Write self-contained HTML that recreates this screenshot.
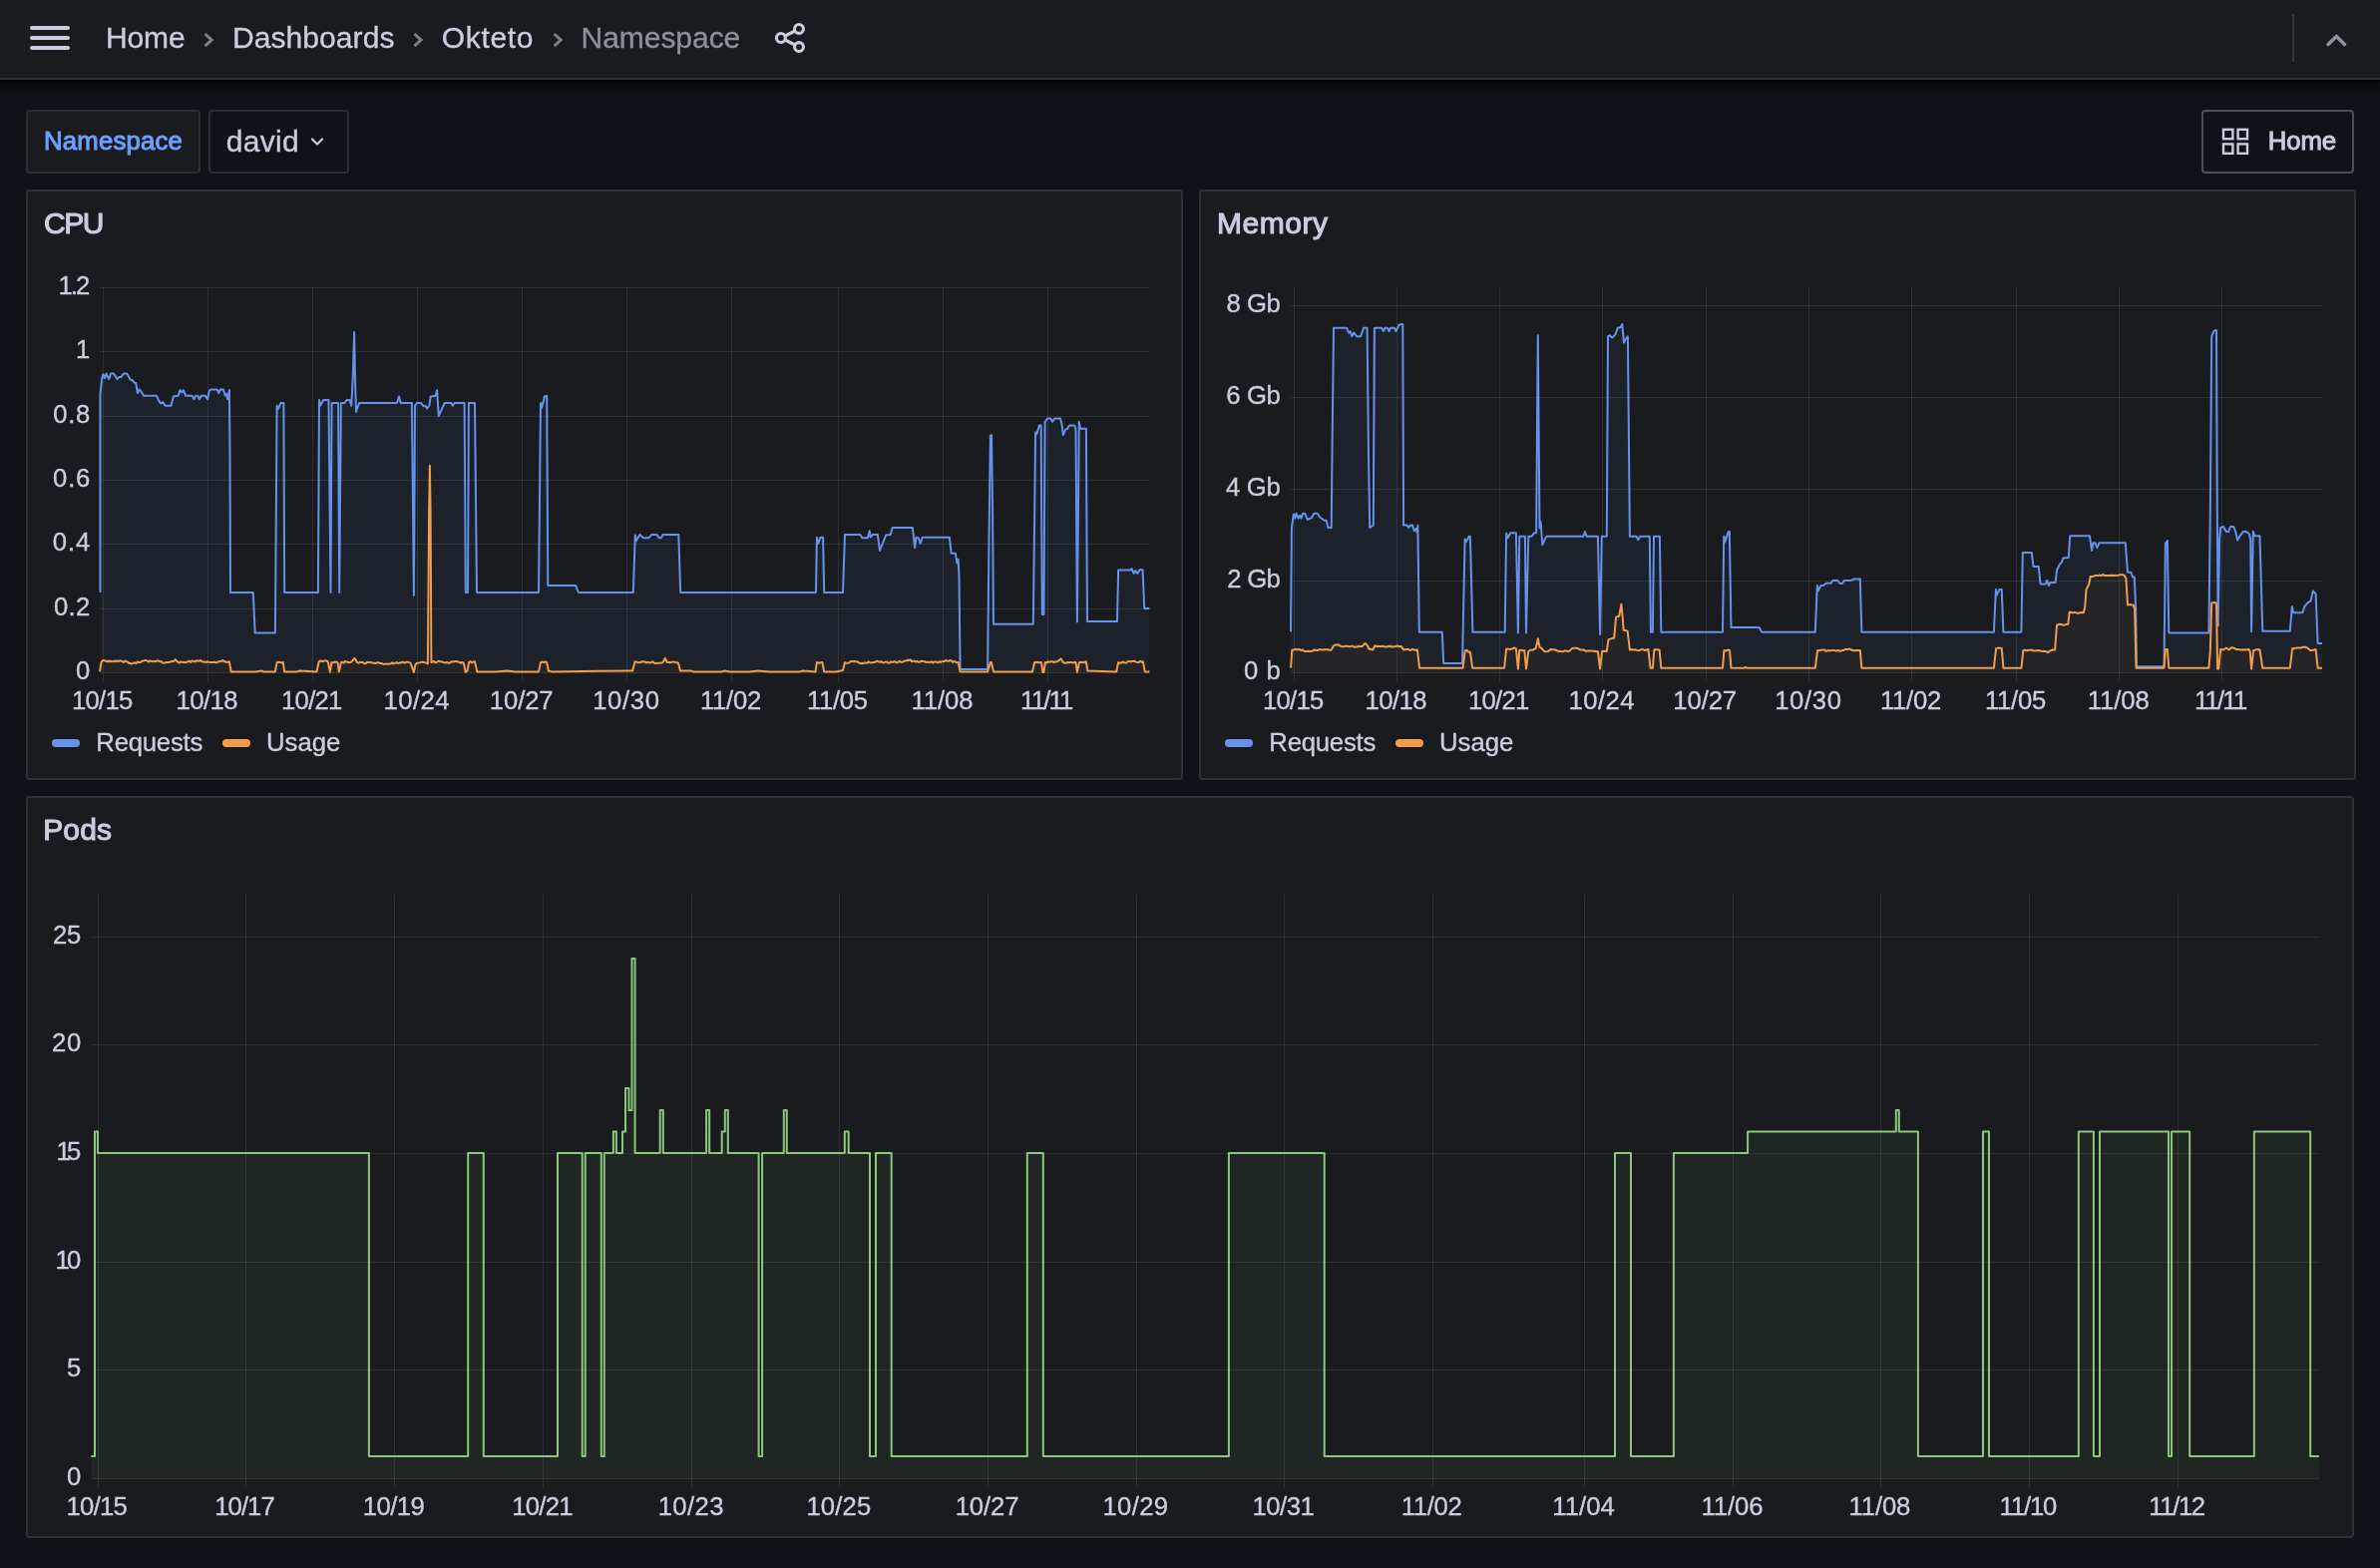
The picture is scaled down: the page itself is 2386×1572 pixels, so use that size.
<!DOCTYPE html>
<html lang="en">
<head>
<meta charset="utf-8">
<title>Namespace - Okteto - Dashboards - Grafana</title>
<style>
html,body{margin:0;padding:0}
body{width:2386px;height:1572px;overflow:hidden;background:#111217;font-family:"Liberation Sans", sans-serif;color:#ccccdc;position:relative}
.topbar{position:absolute;left:0;top:0;width:2386px;height:78px;background:#1a1b1f;border-bottom:2px solid #2e3035}
.shadow{position:absolute;left:0;top:80px;width:2386px;height:16px;background:linear-gradient(#000 0,#060709 1.5px,#0b0c0f 5px,#0f1014 10px,#111217 16px)}
.abs{position:absolute}
svg.top{position:absolute;left:0;top:0;will-change:transform}
.box{position:absolute;box-sizing:border-box;top:110px;height:64px;border:2px solid #2c2e34;border-radius:4px}
.panel{position:absolute;box-sizing:border-box;background:#1a1b1f;border:2px solid #2e3035;border-radius:4px;overflow:hidden}
svg.ch{position:absolute;left:-2px;top:-2px;will-change:transform}
</style>
</head>
<body>
<div class="topbar"></div>
<div class="shadow"></div>
<div class="box" style="left:26px;width:175px;background:#1a1b1f"></div>
<div class="box" style="left:209px;width:141px;background:#111217"></div>
<div class="box" style="left:2207px;width:153px;background:#111217;border-color:#4c4d56"></div>
<div class="panel" style="left:26px;top:190px;width:1160px;height:592px">
<svg class="ch" viewBox="26 190 1160 592" width="1160" height="592" font-family='"Liberation Sans", sans-serif'>
<path d="M103.5 288V683M208.5 288V683M313.5 288V683M418.5 288V683M523.5 288V683M628.5 288V683M733.5 288V683M840.5 288V683M945.5 288V683M1050.5 288V683M100.2 674.5H1152.3M100.2 610.5H1152.3M100.2 545.5H1152.3M100.2 481.5H1152.3M100.2 417.5H1152.3M100.2 352.5H1152.3M100.2 288.5H1152.3" stroke="rgba(240,250,255,0.09)" stroke-width="1" fill="none"/>
<polygon points="100.5,674.5 100.5,594.0 100.5,394.7 102.0,380.7 103.3,375.1 105.0,379.3 106.4,374.5 109.2,380.1 111.2,374.5 114.0,374.5 117.4,380.1 119.6,377.9 121.6,377.9 123.8,374.5 127.2,374.5 130.8,380.7 132.8,381.2 134.5,383.5 136.2,384.0 137.9,394.1 139.6,390.5 141.2,391.9 144.0,396.7 156.9,396.7 159.5,402.3 161.2,404.5 163.1,403.1 165.9,406.8 171.5,406.8 173.8,397.5 178.6,396.7 180.5,391.1 182.2,393.3 183.9,391.1 186.1,396.7 192.6,396.7 194.6,400.3 196.2,396.7 198.2,396.7 199.9,400.3 201.8,396.7 205.8,396.7 208.0,400.3 209.7,391.9 211.4,390.5 217.8,390.5 219.2,394.1 220.9,390.5 224.0,390.5 225.7,396.7 227.1,394.7 228.2,400.3 229.9,391.1 230.5,456.4 231.0,594.0 253.8,594.0 255.7,634.6 275.9,634.6 277.6,406.8 278.8,410.1 281.6,404.0 284.4,404.0 285.2,594.0 318.9,594.0 320.0,400.9 321.1,406.8 323.1,403.1 324.5,400.9 329.5,400.9 331.5,594.0 332.6,404.0 339.1,404.0 340.2,594.0 341.9,404.0 345.5,404.0 347.8,400.9 350.6,400.9 352.3,406.8 354.0,372.2 355.1,333.0 356.2,386.3 357.0,412.9 360.1,404.0 398.0,404.0 400.0,397.5 401.7,404.0 412.9,404.0 414.9,596.8 416.0,406.8 417.9,404.0 421.9,404.0 424.7,407.3 426.4,406.8 428.0,409.6 430.3,406.8 431.7,397.5 436.7,396.7 438.1,391.1 439.8,417.2 445.7,404.0 452.2,404.0 453.9,406.8 455.6,404.0 465.6,404.0 466.8,594.0 469.0,594.0 469.9,404.0 476.0,404.0 478.0,594.0 540.0,594.0 542.0,404.0 543.1,408.7 545.9,397.5 548.2,396.7 549.3,586.9 577.1,586.9 579.9,594.0 599.8,594.0 634.8,594.0 636.8,536.4 637.9,542.0 641.5,535.9 644.9,539.2 650.5,539.2 653.3,535.9 658.4,535.9 660.6,539.2 662.9,539.2 664.5,535.9 680.3,535.9 682.2,594.0 818.0,594.0 818.9,538.7 820.3,544.9 822.5,538.7 825.1,538.7 826.2,594.0 845.0,594.0 847.0,535.9 862.4,535.9 864.4,539.2 870.0,539.2 871.7,532.2 872.8,538.7 875.0,535.9 879.8,535.9 882.0,551.9 888.2,536.4 892.7,535.9 894.7,528.9 914.9,528.9 917.1,549.1 918.5,538.7 920.8,539.2 922.7,544.9 924.7,538.7 951.9,538.7 953.6,554.7 957.8,554.7 959.5,564.5 960.6,560.8 961.5,577.1 962.6,671.1 990.1,671.1 991.5,540.6 992.9,436.8 994.0,436.2 995.1,512.6 996.0,625.7 1035.8,625.7 1037.2,512.6 1038.1,433.4 1039.2,435.4 1042.0,426.4 1043.7,426.4 1044.8,615.9 1046.5,615.9 1047.6,422.8 1050.4,419.4 1053.2,419.4 1055.2,422.8 1057.4,419.4 1063.0,419.4 1064.5,425.6 1065.9,436.2 1068.1,430.6 1070.1,429.8 1072.0,426.4 1077.1,426.4 1078.5,429.8 1079.9,623.4 1081.8,422.8 1083.0,429.8 1088.9,429.8 1090.0,622.9 1120.0,622.9 1121.1,571.5 1133.2,571.5 1134.6,570.1 1136.6,574.9 1138.3,572.1 1140.2,574.9 1143.0,570.9 1145.6,571.5 1147.2,610.0 1152.3,610.0 1152.3,674.5" fill="#5096eb" fill-opacity="0.055"/>
<polyline points="100.5,594.0 100.5,394.7 102.0,380.7 103.3,375.1 105.0,379.3 106.4,374.5 109.2,380.1 111.2,374.5 114.0,374.5 117.4,380.1 119.6,377.9 121.6,377.9 123.8,374.5 127.2,374.5 130.8,380.7 132.8,381.2 134.5,383.5 136.2,384.0 137.9,394.1 139.6,390.5 141.2,391.9 144.0,396.7 156.9,396.7 159.5,402.3 161.2,404.5 163.1,403.1 165.9,406.8 171.5,406.8 173.8,397.5 178.6,396.7 180.5,391.1 182.2,393.3 183.9,391.1 186.1,396.7 192.6,396.7 194.6,400.3 196.2,396.7 198.2,396.7 199.9,400.3 201.8,396.7 205.8,396.7 208.0,400.3 209.7,391.9 211.4,390.5 217.8,390.5 219.2,394.1 220.9,390.5 224.0,390.5 225.7,396.7 227.1,394.7 228.2,400.3 229.9,391.1 230.5,456.4 231.0,594.0 253.8,594.0 255.7,634.6 275.9,634.6 277.6,406.8 278.8,410.1 281.6,404.0 284.4,404.0 285.2,594.0 318.9,594.0 320.0,400.9 321.1,406.8 323.1,403.1 324.5,400.9 329.5,400.9 331.5,594.0 332.6,404.0 339.1,404.0 340.2,594.0 341.9,404.0 345.5,404.0 347.8,400.9 350.6,400.9 352.3,406.8 354.0,372.2 355.1,333.0 356.2,386.3 357.0,412.9 360.1,404.0 398.0,404.0 400.0,397.5 401.7,404.0 412.9,404.0 414.9,596.8 416.0,406.8 417.9,404.0 421.9,404.0 424.7,407.3 426.4,406.8 428.0,409.6 430.3,406.8 431.7,397.5 436.7,396.7 438.1,391.1 439.8,417.2 445.7,404.0 452.2,404.0 453.9,406.8 455.6,404.0 465.6,404.0 466.8,594.0 469.0,594.0 469.9,404.0 476.0,404.0 478.0,594.0 540.0,594.0 542.0,404.0 543.1,408.7 545.9,397.5 548.2,396.7 549.3,586.9 577.1,586.9 579.9,594.0 599.8,594.0 634.8,594.0 636.8,536.4 637.9,542.0 641.5,535.9 644.9,539.2 650.5,539.2 653.3,535.9 658.4,535.9 660.6,539.2 662.9,539.2 664.5,535.9 680.3,535.9 682.2,594.0 818.0,594.0 818.9,538.7 820.3,544.9 822.5,538.7 825.1,538.7 826.2,594.0 845.0,594.0 847.0,535.9 862.4,535.9 864.4,539.2 870.0,539.2 871.7,532.2 872.8,538.7 875.0,535.9 879.8,535.9 882.0,551.9 888.2,536.4 892.7,535.9 894.7,528.9 914.9,528.9 917.1,549.1 918.5,538.7 920.8,539.2 922.7,544.9 924.7,538.7 951.9,538.7 953.6,554.7 957.8,554.7 959.5,564.5 960.6,560.8 961.5,577.1 962.6,671.1 990.1,671.1 991.5,540.6 992.9,436.8 994.0,436.2 995.1,512.6 996.0,625.7 1035.8,625.7 1037.2,512.6 1038.1,433.4 1039.2,435.4 1042.0,426.4 1043.7,426.4 1044.8,615.9 1046.5,615.9 1047.6,422.8 1050.4,419.4 1053.2,419.4 1055.2,422.8 1057.4,419.4 1063.0,419.4 1064.5,425.6 1065.9,436.2 1068.1,430.6 1070.1,429.8 1072.0,426.4 1077.1,426.4 1078.5,429.8 1079.9,623.4 1081.8,422.8 1083.0,429.8 1088.9,429.8 1090.0,622.9 1120.0,622.9 1121.1,571.5 1133.2,571.5 1134.6,570.1 1136.6,574.9 1138.3,572.1 1140.2,574.9 1143.0,570.9 1145.6,571.5 1147.2,610.0 1152.3,610.0" fill="none" stroke="#6592eb" stroke-width="2" stroke-linejoin="round"/>
<polygon points="100.0,674.5 100.0,673.4 101.4,664.1 103.3,661.9 105.2,662.3 107.0,663.3 108.3,662.6 109.6,663.5 110.9,662.5 112.2,663.3 113.5,663.0 114.9,662.5 116.2,663.3 117.5,662.4 118.8,663.2 120.1,662.5 121.4,662.5 122.7,663.1 124.0,663.9 125.3,662.6 126.6,663.3 128.0,663.6 129.4,665.0 130.9,665.1 132.3,665.5 133.7,664.7 135.1,664.3 136.5,665.2 137.9,663.4 139.3,664.1 140.7,664.3 142.1,662.8 143.5,662.7 144.9,662.1 146.3,662.1 147.7,662.5 149.1,663.5 150.5,662.4 151.9,663.1 153.3,663.3 154.7,662.9 156.1,663.2 157.5,662.4 158.9,662.4 160.3,663.3 161.7,663.2 163.1,664.5 164.5,664.7 165.9,664.3 167.3,663.9 168.7,664.1 170.1,663.7 171.5,663.1 172.9,663.3 174.3,662.8 175.8,661.3 178.6,664.1 180.0,664.4 181.4,663.4 182.8,663.9 184.2,663.7 185.6,664.2 187.0,663.8 188.4,663.3 189.8,662.8 191.2,664.0 192.6,662.4 194.0,662.8 195.4,663.4 196.8,662.2 198.2,662.8 199.6,662.7 201.0,662.0 202.4,663.3 203.8,663.6 205.2,663.4 206.6,664.1 208.0,663.2 209.4,664.0 210.8,664.0 212.2,664.1 213.6,664.1 215.0,663.8 216.4,664.3 217.8,664.2 219.3,663.1 220.7,663.2 222.1,662.7 223.4,662.0 224.7,663.3 226.0,663.3 227.3,664.0 228.6,663.8 229.9,663.3 231.6,673.4 255.7,673.4 262.8,672.5 264.1,673.4 275.9,673.4 277.6,664.1 279.2,663.7 280.7,663.9 282.3,664.4 283.8,664.1 285.2,673.4 297.8,673.4 300.6,672.5 317.5,673.4 319.7,663.3 321.2,662.4 322.7,663.2 324.2,662.7 325.7,662.6 327.2,662.5 328.7,663.3 330.9,673.9 332.4,664.1 333.9,664.6 335.4,663.5 337.0,663.7 338.5,664.1 339.9,673.4 341.9,664.1 343.2,663.8 344.6,664.6 345.9,663.0 347.2,663.6 348.6,663.7 349.9,664.2 351.2,664.0 352.6,663.3 355.4,659.9 358.2,664.1 359.6,664.8 361.0,663.8 362.4,664.1 363.8,664.1 365.2,665.1 366.6,665.2 368.0,663.8 369.4,663.9 370.8,664.1 372.2,664.1 373.6,664.7 375.0,664.7 376.4,665.0 377.8,664.5 379.2,664.1 380.6,664.9 382.0,664.9 383.4,665.3 384.8,666.1 386.2,665.7 387.6,665.4 389.0,665.7 390.4,665.5 391.8,665.6 393.2,664.2 394.7,665.4 396.1,664.9 397.5,664.1 398.9,664.9 400.3,664.8 401.7,664.1 403.1,664.2 404.5,663.7 405.9,664.7 407.3,663.7 408.7,663.8 410.1,664.1 411.5,664.7 414.9,673.9 416.5,666.1 418.1,664.8 419.7,664.5 421.3,664.1 422.8,663.6 424.3,663.8 425.9,664.3 427.4,664.5 428.9,665.5 430.1,512.6 430.9,466.8 431.6,512.6 432.4,664.1 433.8,663.7 435.2,663.0 436.7,664.4 438.1,663.8 439.5,662.8 440.9,663.3 442.4,663.2 443.8,663.7 445.2,664.1 446.6,664.7 448.0,663.7 449.4,664.7 450.8,664.7 452.2,663.5 453.6,663.3 455.0,663.4 456.4,662.9 457.8,663.1 459.2,663.7 460.6,663.7 462.0,664.9 463.4,663.9 464.8,664.7 466.8,673.9 468.5,672.5 470.1,664.1 471.6,663.0 473.1,664.5 474.6,663.5 476.0,663.3 478.3,673.4 497.1,673.4 508.3,672.5 516.7,673.4 540.0,673.4 542.0,664.1 543.5,663.5 545.1,664.2 546.6,663.3 548.2,664.1 549.8,672.5 553.2,673.4 599.8,672.8 628.1,672.5 634.2,672.5 636.5,663.3 637.9,663.4 639.3,664.3 640.7,664.2 642.1,664.0 643.5,663.3 644.9,663.5 646.3,663.3 647.7,664.4 649.1,664.1 650.5,664.1 651.9,664.6 653.3,663.8 654.7,663.6 656.1,664.7 657.5,665.0 658.9,664.8 660.3,664.7 661.7,664.7 663.1,664.6 664.5,664.1 666.8,659.9 668.8,664.1 670.2,663.7 671.6,664.3 673.0,664.1 674.4,663.6 675.8,663.6 677.2,664.1 678.6,664.2 680.0,664.7 682.0,672.5 692.6,672.5 695.4,673.4 723.5,673.4 726.3,672.5 731.9,673.4 751.5,673.4 760.0,672.5 771.2,673.4 802.1,673.4 804.9,672.5 817.5,673.4 818.9,664.1 820.3,664.5 821.7,664.9 823.1,664.0 824.5,664.1 826.2,673.4 838.5,673.4 845.0,672.0 847.0,664.1 848.4,664.8 849.8,664.7 851.2,664.5 852.6,663.3 854.0,662.9 855.4,663.3 856.8,663.0 858.2,663.2 859.6,663.4 861.0,664.4 862.4,665.2 863.8,664.7 865.2,665.2 866.6,664.4 868.0,664.6 869.4,664.7 870.8,663.3 872.2,664.3 873.6,664.6 875.0,664.2 876.4,664.1 877.8,663.5 879.2,662.8 880.6,663.3 882.0,663.9 883.4,663.1 884.8,664.1 886.3,664.5 887.7,663.5 889.1,663.6 890.5,664.7 891.9,664.4 893.3,663.4 894.7,664.1 896.1,663.3 897.5,663.2 898.9,664.4 900.3,664.0 901.7,662.7 903.1,663.7 904.5,663.8 905.9,663.1 907.3,662.4 908.7,662.6 910.1,661.6 911.5,662.1 912.8,661.4 914.1,663.3 915.4,662.8 916.7,662.7 918.1,663.6 919.4,662.8 920.7,663.7 922.0,663.8 923.3,662.8 924.6,663.0 925.9,663.2 927.2,663.3 928.5,664.0 929.8,663.6 931.1,664.1 932.5,663.9 933.8,663.3 935.1,664.6 936.4,663.5 937.7,663.6 939.0,663.7 940.3,664.2 941.6,663.2 942.9,664.0 944.2,663.2 945.6,663.1 946.9,663.0 948.2,662.0 949.5,662.7 950.8,662.7 952.2,662.3 953.6,662.2 955.0,663.9 956.4,662.9 957.8,663.7 959.2,664.3 960.6,664.1 962.6,673.4 990.1,673.4 992.9,664.1 994.0,664.1 996.0,673.4 1035.0,673.4 1037.2,664.1 1038.6,664.2 1039.9,663.8 1041.3,664.2 1042.6,664.2 1044.0,664.1 1045.4,673.9 1046.5,673.9 1047.9,664.1 1049.3,664.5 1050.6,663.2 1052.0,663.9 1053.4,663.3 1054.8,663.2 1056.1,664.0 1057.5,663.5 1058.9,663.5 1060.2,663.3 1063.6,660.5 1065.9,664.1 1067.3,664.6 1068.7,664.9 1070.1,664.0 1071.5,664.3 1072.9,664.1 1074.3,664.1 1075.7,664.5 1077.1,664.0 1078.5,664.1 1079.9,673.9 1082.1,664.1 1083.5,664.0 1084.8,663.7 1086.2,664.4 1087.5,663.8 1088.9,663.3 1090.3,672.5 1119.2,673.4 1121.1,664.1 1122.5,664.8 1123.9,664.8 1125.3,663.5 1126.6,664.0 1128.0,664.7 1129.4,664.4 1130.7,663.1 1132.1,663.1 1133.5,663.6 1134.9,662.9 1136.2,663.1 1137.6,662.8 1139.0,663.8 1140.4,664.0 1141.7,664.1 1143.1,662.7 1144.5,663.7 1145.8,663.3 1147.8,673.4 1152.3,673.4 1152.3,674.5" fill="#b36509" fill-opacity="0.06"/>
<polyline points="100.0,673.4 101.4,664.1 103.3,661.9 105.2,662.3 107.0,663.3 108.3,662.6 109.6,663.5 110.9,662.5 112.2,663.3 113.5,663.0 114.9,662.5 116.2,663.3 117.5,662.4 118.8,663.2 120.1,662.5 121.4,662.5 122.7,663.1 124.0,663.9 125.3,662.6 126.6,663.3 128.0,663.6 129.4,665.0 130.9,665.1 132.3,665.5 133.7,664.7 135.1,664.3 136.5,665.2 137.9,663.4 139.3,664.1 140.7,664.3 142.1,662.8 143.5,662.7 144.9,662.1 146.3,662.1 147.7,662.5 149.1,663.5 150.5,662.4 151.9,663.1 153.3,663.3 154.7,662.9 156.1,663.2 157.5,662.4 158.9,662.4 160.3,663.3 161.7,663.2 163.1,664.5 164.5,664.7 165.9,664.3 167.3,663.9 168.7,664.1 170.1,663.7 171.5,663.1 172.9,663.3 174.3,662.8 175.8,661.3 178.6,664.1 180.0,664.4 181.4,663.4 182.8,663.9 184.2,663.7 185.6,664.2 187.0,663.8 188.4,663.3 189.8,662.8 191.2,664.0 192.6,662.4 194.0,662.8 195.4,663.4 196.8,662.2 198.2,662.8 199.6,662.7 201.0,662.0 202.4,663.3 203.8,663.6 205.2,663.4 206.6,664.1 208.0,663.2 209.4,664.0 210.8,664.0 212.2,664.1 213.6,664.1 215.0,663.8 216.4,664.3 217.8,664.2 219.3,663.1 220.7,663.2 222.1,662.7 223.4,662.0 224.7,663.3 226.0,663.3 227.3,664.0 228.6,663.8 229.9,663.3 231.6,673.4 255.7,673.4 262.8,672.5 264.1,673.4 275.9,673.4 277.6,664.1 279.2,663.7 280.7,663.9 282.3,664.4 283.8,664.1 285.2,673.4 297.8,673.4 300.6,672.5 317.5,673.4 319.7,663.3 321.2,662.4 322.7,663.2 324.2,662.7 325.7,662.6 327.2,662.5 328.7,663.3 330.9,673.9 332.4,664.1 333.9,664.6 335.4,663.5 337.0,663.7 338.5,664.1 339.9,673.4 341.9,664.1 343.2,663.8 344.6,664.6 345.9,663.0 347.2,663.6 348.6,663.7 349.9,664.2 351.2,664.0 352.6,663.3 355.4,659.9 358.2,664.1 359.6,664.8 361.0,663.8 362.4,664.1 363.8,664.1 365.2,665.1 366.6,665.2 368.0,663.8 369.4,663.9 370.8,664.1 372.2,664.1 373.6,664.7 375.0,664.7 376.4,665.0 377.8,664.5 379.2,664.1 380.6,664.9 382.0,664.9 383.4,665.3 384.8,666.1 386.2,665.7 387.6,665.4 389.0,665.7 390.4,665.5 391.8,665.6 393.2,664.2 394.7,665.4 396.1,664.9 397.5,664.1 398.9,664.9 400.3,664.8 401.7,664.1 403.1,664.2 404.5,663.7 405.9,664.7 407.3,663.7 408.7,663.8 410.1,664.1 411.5,664.7 414.9,673.9 416.5,666.1 418.1,664.8 419.7,664.5 421.3,664.1 422.8,663.6 424.3,663.8 425.9,664.3 427.4,664.5 428.9,665.5 430.1,512.6 430.9,466.8 431.6,512.6 432.4,664.1 433.8,663.7 435.2,663.0 436.7,664.4 438.1,663.8 439.5,662.8 440.9,663.3 442.4,663.2 443.8,663.7 445.2,664.1 446.6,664.7 448.0,663.7 449.4,664.7 450.8,664.7 452.2,663.5 453.6,663.3 455.0,663.4 456.4,662.9 457.8,663.1 459.2,663.7 460.6,663.7 462.0,664.9 463.4,663.9 464.8,664.7 466.8,673.9 468.5,672.5 470.1,664.1 471.6,663.0 473.1,664.5 474.6,663.5 476.0,663.3 478.3,673.4 497.1,673.4 508.3,672.5 516.7,673.4 540.0,673.4 542.0,664.1 543.5,663.5 545.1,664.2 546.6,663.3 548.2,664.1 549.8,672.5 553.2,673.4 599.8,672.8 628.1,672.5 634.2,672.5 636.5,663.3 637.9,663.4 639.3,664.3 640.7,664.2 642.1,664.0 643.5,663.3 644.9,663.5 646.3,663.3 647.7,664.4 649.1,664.1 650.5,664.1 651.9,664.6 653.3,663.8 654.7,663.6 656.1,664.7 657.5,665.0 658.9,664.8 660.3,664.7 661.7,664.7 663.1,664.6 664.5,664.1 666.8,659.9 668.8,664.1 670.2,663.7 671.6,664.3 673.0,664.1 674.4,663.6 675.8,663.6 677.2,664.1 678.6,664.2 680.0,664.7 682.0,672.5 692.6,672.5 695.4,673.4 723.5,673.4 726.3,672.5 731.9,673.4 751.5,673.4 760.0,672.5 771.2,673.4 802.1,673.4 804.9,672.5 817.5,673.4 818.9,664.1 820.3,664.5 821.7,664.9 823.1,664.0 824.5,664.1 826.2,673.4 838.5,673.4 845.0,672.0 847.0,664.1 848.4,664.8 849.8,664.7 851.2,664.5 852.6,663.3 854.0,662.9 855.4,663.3 856.8,663.0 858.2,663.2 859.6,663.4 861.0,664.4 862.4,665.2 863.8,664.7 865.2,665.2 866.6,664.4 868.0,664.6 869.4,664.7 870.8,663.3 872.2,664.3 873.6,664.6 875.0,664.2 876.4,664.1 877.8,663.5 879.2,662.8 880.6,663.3 882.0,663.9 883.4,663.1 884.8,664.1 886.3,664.5 887.7,663.5 889.1,663.6 890.5,664.7 891.9,664.4 893.3,663.4 894.7,664.1 896.1,663.3 897.5,663.2 898.9,664.4 900.3,664.0 901.7,662.7 903.1,663.7 904.5,663.8 905.9,663.1 907.3,662.4 908.7,662.6 910.1,661.6 911.5,662.1 912.8,661.4 914.1,663.3 915.4,662.8 916.7,662.7 918.1,663.6 919.4,662.8 920.7,663.7 922.0,663.8 923.3,662.8 924.6,663.0 925.9,663.2 927.2,663.3 928.5,664.0 929.8,663.6 931.1,664.1 932.5,663.9 933.8,663.3 935.1,664.6 936.4,663.5 937.7,663.6 939.0,663.7 940.3,664.2 941.6,663.2 942.9,664.0 944.2,663.2 945.6,663.1 946.9,663.0 948.2,662.0 949.5,662.7 950.8,662.7 952.2,662.3 953.6,662.2 955.0,663.9 956.4,662.9 957.8,663.7 959.2,664.3 960.6,664.1 962.6,673.4 990.1,673.4 992.9,664.1 994.0,664.1 996.0,673.4 1035.0,673.4 1037.2,664.1 1038.6,664.2 1039.9,663.8 1041.3,664.2 1042.6,664.2 1044.0,664.1 1045.4,673.9 1046.5,673.9 1047.9,664.1 1049.3,664.5 1050.6,663.2 1052.0,663.9 1053.4,663.3 1054.8,663.2 1056.1,664.0 1057.5,663.5 1058.9,663.5 1060.2,663.3 1063.6,660.5 1065.9,664.1 1067.3,664.6 1068.7,664.9 1070.1,664.0 1071.5,664.3 1072.9,664.1 1074.3,664.1 1075.7,664.5 1077.1,664.0 1078.5,664.1 1079.9,673.9 1082.1,664.1 1083.5,664.0 1084.8,663.7 1086.2,664.4 1087.5,663.8 1088.9,663.3 1090.3,672.5 1119.2,673.4 1121.1,664.1 1122.5,664.8 1123.9,664.8 1125.3,663.5 1126.6,664.0 1128.0,664.7 1129.4,664.4 1130.7,663.1 1132.1,663.1 1133.5,663.6 1134.9,662.9 1136.2,663.1 1137.6,662.8 1139.0,663.8 1140.4,664.0 1141.7,664.1 1143.1,662.7 1144.5,663.7 1145.8,663.3 1147.8,673.4 1152.3,673.4" fill="none" stroke="#f19d49" stroke-width="2" stroke-linejoin="round"/>
<text x="102.6" y="711.0" font-size="25.7" fill="#ccccdc" text-anchor="middle" textLength="61.2" lengthAdjust="spacing" stroke="#ccccdc" stroke-width="0.35">10/15</text>
<text x="207.6" y="711.0" font-size="25.7" fill="#ccccdc" text-anchor="middle" textLength="62.0" lengthAdjust="spacing" stroke="#ccccdc" stroke-width="0.35">10/18</text>
<text x="312.7" y="711.0" font-size="25.7" fill="#ccccdc" text-anchor="middle" textLength="61.2" lengthAdjust="spacing" stroke="#ccccdc" stroke-width="0.35">10/21</text>
<text x="417.6" y="711.0" font-size="25.7" fill="#ccccdc" text-anchor="middle" textLength="66.0" lengthAdjust="spacing" stroke="#ccccdc" stroke-width="0.35">10/24</text>
<text x="522.7" y="711.0" font-size="25.7" fill="#ccccdc" text-anchor="middle" textLength="63.9" lengthAdjust="spacing" stroke="#ccccdc" stroke-width="0.35">10/27</text>
<text x="627.6" y="711.0" font-size="25.7" fill="#ccccdc" text-anchor="middle" textLength="66.8" lengthAdjust="spacing" stroke="#ccccdc" stroke-width="0.35">10/30</text>
<text x="732.6" y="711.0" font-size="25.7" fill="#ccccdc" text-anchor="middle" textLength="61.2" lengthAdjust="spacing" stroke="#ccccdc" stroke-width="0.35">11/02</text>
<text x="839.5" y="711.0" font-size="25.7" fill="#ccccdc" text-anchor="middle" textLength="61.2" lengthAdjust="spacing" stroke="#ccccdc" stroke-width="0.35">11/05</text>
<text x="944.5" y="711.0" font-size="25.7" fill="#ccccdc" text-anchor="middle" textLength="62.0" lengthAdjust="spacing" stroke="#ccccdc" stroke-width="0.35">11/08</text>
<text x="1049.7" y="711.0" font-size="25.7" fill="#ccccdc" text-anchor="middle" textLength="53.2" lengthAdjust="spacing" stroke="#ccccdc" stroke-width="0.35">11/11</text>
<text x="90.3" y="680.7" font-size="25.7" fill="#ccccdc" text-anchor="end" textLength="15.2" lengthAdjust="spacing" stroke="#ccccdc" stroke-width="0.35">0</text>
<text x="90.3" y="616.7" font-size="25.7" fill="#ccccdc" text-anchor="end" textLength="36.3" lengthAdjust="spacing" stroke="#ccccdc" stroke-width="0.35">0.2</text>
<text x="90.3" y="551.7" font-size="25.7" fill="#ccccdc" text-anchor="end" textLength="37.6" lengthAdjust="spacing" stroke="#ccccdc" stroke-width="0.35">0.4</text>
<text x="90.3" y="487.7" font-size="25.7" fill="#ccccdc" text-anchor="end" textLength="37.2" lengthAdjust="spacing" stroke="#ccccdc" stroke-width="0.35">0.6</text>
<text x="90.3" y="423.7" font-size="25.7" fill="#ccccdc" text-anchor="end" textLength="37.1" lengthAdjust="spacing" stroke="#ccccdc" stroke-width="0.35">0.8</text>
<text x="90.3" y="358.7" font-size="25.7" fill="#ccccdc" text-anchor="end" textLength="10.7" lengthAdjust="spacing" stroke="#ccccdc" stroke-width="0.35">1</text>
<text x="90.3" y="294.7" font-size="25.7" fill="#ccccdc" text-anchor="end" textLength="31.8" lengthAdjust="spacing" stroke="#ccccdc" stroke-width="0.35">1.2</text>
<rect x="52" y="741" width="28" height="8" rx="4" fill="#6592eb"/><text x="96.3" y="753.0" font-size="25.7" fill="#ccccdc" textLength="107.0" lengthAdjust="spacing" stroke="#ccccdc" stroke-width="0.35">Requests</text><rect x="223" y="741" width="28" height="8" rx="4" fill="#f19d49"/><text x="267.0" y="753.0" font-size="25.7" fill="#ccccdc" textLength="74.3" lengthAdjust="spacing" stroke="#ccccdc" stroke-width="0.35">Usage</text>
</svg>
</div>
<div class="panel" style="left:1202px;top:190px;width:1160px;height:592px">
<svg class="ch" viewBox="1202 190 1160 592" width="1160" height="592" font-family='"Liberation Sans", sans-serif'>
<path d="M1297.5 288V683M1400.5 288V683M1503.5 288V683M1606.5 288V683M1710.5 288V683M1813.5 288V683M1916.5 288V683M2021.5 288V683M2124.5 288V683M2227.5 288V683M1294.2 674.5H2328.7M1294.2 582.5H2328.7M1294.2 490.5H2328.7M1294.2 398.5H2328.7M1294.2 306.5H2328.7" stroke="rgba(240,250,255,0.09)" stroke-width="1" fill="none"/>
<polygon points="1294.0,674.5 1294.0,633.2 1294.9,529.4 1296.8,515.4 1298.2,519.6 1299.6,514.8 1301.6,519.6 1303.3,516.8 1304.4,519.6 1306.1,514.8 1308.3,514.8 1310.8,521.0 1315.1,518.8 1317.3,514.8 1320.7,514.8 1323.5,518.8 1327.7,521.8 1329.9,521.8 1331.3,528.9 1334.7,528.9 1335.8,428.4 1337.0,328.8 1350.1,328.8 1352.1,333.5 1353.8,332.4 1355.2,337.2 1357.2,333.5 1360.0,337.2 1364.2,337.2 1367.0,328.8 1370.6,328.8 1372.0,456.4 1373.2,528.9 1376.8,526.6 1377.9,328.8 1385.2,328.8 1386.9,332.1 1388.6,328.8 1390.8,328.8 1392.5,332.1 1394.2,328.8 1397.8,328.8 1399.5,332.1 1402.6,325.4 1406.3,325.1 1407.1,526.6 1410.5,526.6 1412.2,528.9 1413.8,526.6 1416.1,526.6 1417.8,532.2 1419.5,530.0 1420.6,533.6 1421.4,526.6 1422.8,633.8 1445.8,633.8 1447.2,665.0 1466.0,665.0 1468.6,540.6 1469.4,543.4 1472.8,537.8 1473.9,537.8 1476.4,633.8 1508.7,633.8 1510.1,534.5 1511.5,539.2 1514.3,534.2 1519.9,534.2 1521.9,634.6 1523.3,537.8 1528.9,537.8 1530.0,634.6 1532.3,537.8 1535.4,537.8 1538.2,534.2 1540.1,534.2 1541.8,336.3 1543.5,529.4 1544.6,523.2 1546.3,546.2 1550.2,537.8 1587.3,537.8 1589.0,533.1 1590.7,537.8 1601.9,537.8 1604.1,636.0 1605.8,537.8 1610.8,537.8 1612.0,337.2 1614.2,336.3 1616.2,338.6 1619.5,335.2 1621.8,328.8 1624.6,328.2 1626.3,325.1 1628.0,343.6 1629.7,340.0 1631.9,337.2 1633.9,537.8 1640.6,537.8 1642.3,541.2 1644.0,537.8 1653.8,537.8 1654.9,633.8 1656.9,633.8 1658.0,537.8 1663.9,537.8 1665.3,633.8 1727.0,633.8 1728.2,537.8 1729.3,543.4 1732.7,533.1 1733.8,533.1 1735.5,629.0 1763.5,629.0 1766.3,633.8 1779.8,633.8 1819.8,633.8 1821.8,586.9 1822.7,592.5 1825.5,586.9 1828.3,586.9 1830.5,584.7 1835.6,584.7 1837.5,581.9 1842.3,581.9 1844.5,585.0 1846.8,585.0 1849.0,581.9 1855.8,581.9 1858.6,580.5 1864.8,580.5 1866.4,633.8 1998.9,633.8 2000.9,591.1 2001.7,596.8 2004.5,591.1 2006.8,591.1 2008.4,633.8 2026.4,633.8 2027.8,554.1 2036.8,554.1 2038.5,567.9 2043.8,567.9 2045.5,585.5 2050.8,585.5 2052.2,581.9 2053.9,586.9 2055.6,584.1 2060.6,584.1 2062.0,571.5 2064.8,565.9 2066.8,563.6 2068.5,559.4 2073.8,558.9 2075.2,537.3 2094.9,537.3 2097.1,551.9 2098.5,544.3 2100.5,544.3 2102.4,549.1 2104.4,544.3 2130.8,544.3 2133.0,573.8 2136.4,573.8 2138.1,578.5 2139.8,578.5 2141.2,610.8 2142.0,668.3 2169.5,668.3 2170.9,544.9 2172.9,542.0 2174.3,634.6 2214.4,634.6 2215.8,512.6 2217.2,337.2 2219.5,331.6 2222.0,331.0 2222.8,512.6 2223.7,627.6 2225.1,540.6 2226.2,528.9 2229.0,528.0 2231.8,533.1 2234.1,533.1 2236.0,528.0 2239.4,528.0 2241.4,533.6 2243.1,541.5 2245.3,537.8 2248.7,533.1 2251.5,532.8 2254.8,535.0 2256.2,540.6 2257.1,633.2 2258.8,532.8 2260.2,537.3 2265.5,537.3 2268.3,632.7 2295.8,632.7 2297.8,608.0 2299.2,614.2 2308.4,614.2 2310.4,608.0 2313.2,604.6 2316.6,602.4 2318.8,592.5 2321.6,595.4 2323.6,645.0 2328.1,645.0 2328.1,674.5" fill="#5096eb" fill-opacity="0.055"/>
<polyline points="1294.0,633.2 1294.9,529.4 1296.8,515.4 1298.2,519.6 1299.6,514.8 1301.6,519.6 1303.3,516.8 1304.4,519.6 1306.1,514.8 1308.3,514.8 1310.8,521.0 1315.1,518.8 1317.3,514.8 1320.7,514.8 1323.5,518.8 1327.7,521.8 1329.9,521.8 1331.3,528.9 1334.7,528.9 1335.8,428.4 1337.0,328.8 1350.1,328.8 1352.1,333.5 1353.8,332.4 1355.2,337.2 1357.2,333.5 1360.0,337.2 1364.2,337.2 1367.0,328.8 1370.6,328.8 1372.0,456.4 1373.2,528.9 1376.8,526.6 1377.9,328.8 1385.2,328.8 1386.9,332.1 1388.6,328.8 1390.8,328.8 1392.5,332.1 1394.2,328.8 1397.8,328.8 1399.5,332.1 1402.6,325.4 1406.3,325.1 1407.1,526.6 1410.5,526.6 1412.2,528.9 1413.8,526.6 1416.1,526.6 1417.8,532.2 1419.5,530.0 1420.6,533.6 1421.4,526.6 1422.8,633.8 1445.8,633.8 1447.2,665.0 1466.0,665.0 1468.6,540.6 1469.4,543.4 1472.8,537.8 1473.9,537.8 1476.4,633.8 1508.7,633.8 1510.1,534.5 1511.5,539.2 1514.3,534.2 1519.9,534.2 1521.9,634.6 1523.3,537.8 1528.9,537.8 1530.0,634.6 1532.3,537.8 1535.4,537.8 1538.2,534.2 1540.1,534.2 1541.8,336.3 1543.5,529.4 1544.6,523.2 1546.3,546.2 1550.2,537.8 1587.3,537.8 1589.0,533.1 1590.7,537.8 1601.9,537.8 1604.1,636.0 1605.8,537.8 1610.8,537.8 1612.0,337.2 1614.2,336.3 1616.2,338.6 1619.5,335.2 1621.8,328.8 1624.6,328.2 1626.3,325.1 1628.0,343.6 1629.7,340.0 1631.9,337.2 1633.9,537.8 1640.6,537.8 1642.3,541.2 1644.0,537.8 1653.8,537.8 1654.9,633.8 1656.9,633.8 1658.0,537.8 1663.9,537.8 1665.3,633.8 1727.0,633.8 1728.2,537.8 1729.3,543.4 1732.7,533.1 1733.8,533.1 1735.5,629.0 1763.5,629.0 1766.3,633.8 1779.8,633.8 1819.8,633.8 1821.8,586.9 1822.7,592.5 1825.5,586.9 1828.3,586.9 1830.5,584.7 1835.6,584.7 1837.5,581.9 1842.3,581.9 1844.5,585.0 1846.8,585.0 1849.0,581.9 1855.8,581.9 1858.6,580.5 1864.8,580.5 1866.4,633.8 1998.9,633.8 2000.9,591.1 2001.7,596.8 2004.5,591.1 2006.8,591.1 2008.4,633.8 2026.4,633.8 2027.8,554.1 2036.8,554.1 2038.5,567.9 2043.8,567.9 2045.5,585.5 2050.8,585.5 2052.2,581.9 2053.9,586.9 2055.6,584.1 2060.6,584.1 2062.0,571.5 2064.8,565.9 2066.8,563.6 2068.5,559.4 2073.8,558.9 2075.2,537.3 2094.9,537.3 2097.1,551.9 2098.5,544.3 2100.5,544.3 2102.4,549.1 2104.4,544.3 2130.8,544.3 2133.0,573.8 2136.4,573.8 2138.1,578.5 2139.8,578.5 2141.2,610.8 2142.0,668.3 2169.5,668.3 2170.9,544.9 2172.9,542.0 2174.3,634.6 2214.4,634.6 2215.8,512.6 2217.2,337.2 2219.5,331.6 2222.0,331.0 2222.8,512.6 2223.7,627.6 2225.1,540.6 2226.2,528.9 2229.0,528.0 2231.8,533.1 2234.1,533.1 2236.0,528.0 2239.4,528.0 2241.4,533.6 2243.1,541.5 2245.3,537.8 2248.7,533.1 2251.5,532.8 2254.8,535.0 2256.2,540.6 2257.1,633.2 2258.8,532.8 2260.2,537.3 2265.5,537.3 2268.3,632.7 2295.8,632.7 2297.8,608.0 2299.2,614.2 2308.4,614.2 2310.4,608.0 2313.2,604.6 2316.6,602.4 2318.8,592.5 2321.6,595.4 2323.6,645.0 2328.1,645.0" fill="none" stroke="#6592eb" stroke-width="2" stroke-linejoin="round"/>
<polygon points="1294.0,674.5 1294.0,669.7 1295.4,651.5 1297.2,651.5 1298.9,650.8 1300.7,651.5 1302.4,650.9 1304.2,651.9 1305.9,651.6 1307.7,652.9 1309.5,652.9 1311.3,652.8 1313.2,652.9 1315.1,652.9 1317.9,651.5 1319.6,652.0 1321.2,651.9 1322.9,651.1 1324.6,651.4 1326.3,651.5 1328.0,651.3 1329.7,651.2 1331.3,651.3 1333.0,651.7 1334.7,651.5 1337.0,647.3 1339.3,646.3 1341.7,646.4 1344.5,648.1 1346.1,648.2 1347.8,648.1 1349.4,647.6 1351.0,647.9 1352.6,648.3 1354.2,648.1 1355.9,647.6 1357.5,648.7 1359.1,648.4 1360.7,648.6 1362.3,647.7 1364.0,647.9 1365.6,648.1 1368.4,645.0 1370.6,646.7 1372.6,650.9 1374.4,650.7 1376.2,651.5 1378.5,647.3 1380.4,648.0 1382.4,648.1 1384.0,647.9 1385.6,647.7 1387.2,648.0 1388.8,648.6 1390.4,648.5 1392.0,647.9 1393.6,647.7 1395.2,648.6 1396.8,648.2 1398.4,648.3 1400.0,647.7 1401.7,647.6 1403.3,648.3 1404.9,648.1 1407.1,651.5 1408.8,651.1 1410.5,650.9 1412.2,651.0 1413.8,652.0 1416.1,650.9 1418.5,651.7 1420.9,651.5 1423.1,669.7 1466.6,669.7 1468.8,652.3 1470.8,652.0 1472.2,653.7 1473.9,653.7 1476.2,669.7 1508.1,669.7 1510.1,650.6 1512.0,650.8 1513.8,651.0 1515.7,650.6 1517.7,649.5 1519.9,650.1 1521.9,670.6 1523.3,652.0 1525.0,651.6 1526.7,652.4 1528.3,652.0 1530.0,670.6 1532.3,652.9 1534.5,651.7 1536.8,651.5 1539.6,650.1 1541.8,640.3 1543.5,648.7 1545.7,650.1 1548.0,652.9 1550.1,653.3 1552.2,652.9 1555.0,650.9 1557.1,651.2 1559.2,651.5 1562.0,652.9 1563.6,652.7 1565.2,652.9 1566.8,653.4 1568.4,652.6 1570.0,652.5 1571.6,652.9 1573.2,652.9 1576.0,650.1 1577.9,649.8 1579.8,649.7 1581.7,650.1 1584.5,651.5 1587.3,651.5 1590.1,652.9 1591.8,652.5 1593.4,652.4 1595.1,652.6 1596.8,652.7 1598.5,652.7 1600.2,653.2 1601.9,652.9 1604.1,670.6 1606.1,652.9 1608.5,652.7 1610.8,652.9 1612.5,641.1 1614.4,640.6 1616.3,639.8 1618.2,639.7 1620.1,618.6 1623.2,617.8 1625.4,605.7 1626.6,617.8 1627.7,631.8 1629.7,632.1 1631.6,632.7 1633.9,651.5 1635.8,651.1 1637.7,651.4 1639.6,651.3 1641.5,652.2 1643.4,652.0 1646.2,650.9 1649.0,652.0 1650.7,651.5 1652.4,650.9 1654.6,669.7 1656.9,669.7 1658.3,651.5 1660.1,651.1 1661.8,651.5 1663.6,651.5 1665.3,669.7 1727.0,669.7 1728.4,652.0 1730.3,652.5 1732.2,651.6 1734.0,652.0 1735.5,669.7 1748.6,669.7 1750.0,668.9 1751.5,669.7 1779.8,669.7 1819.8,669.7 1822.1,652.0 1823.9,652.3 1825.6,651.7 1827.4,651.6 1829.1,651.5 1830.5,652.9 1833.3,652.0 1835.0,652.4 1836.6,651.9 1838.2,652.1 1839.9,652.3 1841.5,652.6 1843.1,652.0 1845.1,652.9 1846.8,652.1 1848.5,651.9 1850.2,650.9 1852.3,651.0 1854.4,650.6 1857.2,652.0 1859.1,652.2 1861.0,651.9 1862.9,651.9 1864.8,652.0 1866.4,669.7 1998.9,669.7 2001.1,650.1 2003.0,649.6 2004.9,649.7 2006.8,650.1 2008.4,669.7 2026.4,669.7 2028.4,652.0 2030.1,651.6 2031.8,652.3 2033.5,651.8 2035.2,651.7 2036.9,651.6 2038.7,652.4 2040.4,652.5 2042.1,652.2 2043.8,652.0 2046.6,652.9 2048.7,652.7 2050.8,652.9 2052.8,654.3 2054.6,652.9 2056.4,652.0 2058.2,651.5 2060.1,651.5 2062.0,626.8 2064.8,625.7 2067.0,626.2 2069.1,626.8 2071.2,625.9 2073.3,625.7 2074.7,613.6 2077.5,614.2 2079.1,614.1 2080.7,613.9 2082.3,614.7 2083.9,614.7 2085.5,614.2 2087.1,613.9 2088.7,614.2 2090.1,609.4 2091.5,591.1 2094.3,585.5 2095.7,578.0 2097.8,578.1 2099.9,577.1 2101.7,576.9 2103.4,577.0 2105.2,576.6 2106.9,577.1 2108.3,575.7 2109.8,577.1 2111.6,577.0 2113.4,577.1 2115.2,577.1 2117.0,576.8 2118.8,577.1 2120.6,576.6 2122.4,577.1 2125.2,576.3 2127.3,576.2 2129.4,576.6 2131.4,579.9 2133.0,606.6 2134.9,606.1 2136.8,606.5 2138.7,606.6 2140.1,610.8 2141.5,669.7 2169.5,669.7 2170.9,650.9 2172.9,650.9 2174.3,669.7 2214.4,669.7 2215.8,652.9 2217.2,604.6 2219.6,604.1 2222.0,604.6 2223.1,670.6 2224.2,670.6 2226.2,650.9 2229.0,651.5 2231.8,649.5 2234.6,651.5 2236.3,649.8 2238.0,649.2 2239.8,649.9 2241.7,650.9 2243.8,650.9 2245.9,651.5 2247.5,651.5 2249.2,651.3 2250.9,651.4 2252.6,651.2 2254.3,650.9 2255.7,652.9 2257.1,670.6 2259.1,652.0 2260.9,651.7 2262.7,650.9 2265.5,651.5 2268.3,669.7 2295.8,669.7 2298.1,650.1 2299.7,650.4 2301.4,649.7 2303.1,649.5 2304.8,649.5 2306.9,649.6 2309.0,648.7 2311.1,648.7 2313.2,649.5 2316.0,652.0 2317.9,651.9 2319.8,651.5 2321.6,650.9 2323.6,669.7 2328.1,669.7 2328.1,674.5" fill="#b36509" fill-opacity="0.06"/>
<polyline points="1294.0,669.7 1295.4,651.5 1297.2,651.5 1298.9,650.8 1300.7,651.5 1302.4,650.9 1304.2,651.9 1305.9,651.6 1307.7,652.9 1309.5,652.9 1311.3,652.8 1313.2,652.9 1315.1,652.9 1317.9,651.5 1319.6,652.0 1321.2,651.9 1322.9,651.1 1324.6,651.4 1326.3,651.5 1328.0,651.3 1329.7,651.2 1331.3,651.3 1333.0,651.7 1334.7,651.5 1337.0,647.3 1339.3,646.3 1341.7,646.4 1344.5,648.1 1346.1,648.2 1347.8,648.1 1349.4,647.6 1351.0,647.9 1352.6,648.3 1354.2,648.1 1355.9,647.6 1357.5,648.7 1359.1,648.4 1360.7,648.6 1362.3,647.7 1364.0,647.9 1365.6,648.1 1368.4,645.0 1370.6,646.7 1372.6,650.9 1374.4,650.7 1376.2,651.5 1378.5,647.3 1380.4,648.0 1382.4,648.1 1384.0,647.9 1385.6,647.7 1387.2,648.0 1388.8,648.6 1390.4,648.5 1392.0,647.9 1393.6,647.7 1395.2,648.6 1396.8,648.2 1398.4,648.3 1400.0,647.7 1401.7,647.6 1403.3,648.3 1404.9,648.1 1407.1,651.5 1408.8,651.1 1410.5,650.9 1412.2,651.0 1413.8,652.0 1416.1,650.9 1418.5,651.7 1420.9,651.5 1423.1,669.7 1466.6,669.7 1468.8,652.3 1470.8,652.0 1472.2,653.7 1473.9,653.7 1476.2,669.7 1508.1,669.7 1510.1,650.6 1512.0,650.8 1513.8,651.0 1515.7,650.6 1517.7,649.5 1519.9,650.1 1521.9,670.6 1523.3,652.0 1525.0,651.6 1526.7,652.4 1528.3,652.0 1530.0,670.6 1532.3,652.9 1534.5,651.7 1536.8,651.5 1539.6,650.1 1541.8,640.3 1543.5,648.7 1545.7,650.1 1548.0,652.9 1550.1,653.3 1552.2,652.9 1555.0,650.9 1557.1,651.2 1559.2,651.5 1562.0,652.9 1563.6,652.7 1565.2,652.9 1566.8,653.4 1568.4,652.6 1570.0,652.5 1571.6,652.9 1573.2,652.9 1576.0,650.1 1577.9,649.8 1579.8,649.7 1581.7,650.1 1584.5,651.5 1587.3,651.5 1590.1,652.9 1591.8,652.5 1593.4,652.4 1595.1,652.6 1596.8,652.7 1598.5,652.7 1600.2,653.2 1601.9,652.9 1604.1,670.6 1606.1,652.9 1608.5,652.7 1610.8,652.9 1612.5,641.1 1614.4,640.6 1616.3,639.8 1618.2,639.7 1620.1,618.6 1623.2,617.8 1625.4,605.7 1626.6,617.8 1627.7,631.8 1629.7,632.1 1631.6,632.7 1633.9,651.5 1635.8,651.1 1637.7,651.4 1639.6,651.3 1641.5,652.2 1643.4,652.0 1646.2,650.9 1649.0,652.0 1650.7,651.5 1652.4,650.9 1654.6,669.7 1656.9,669.7 1658.3,651.5 1660.1,651.1 1661.8,651.5 1663.6,651.5 1665.3,669.7 1727.0,669.7 1728.4,652.0 1730.3,652.5 1732.2,651.6 1734.0,652.0 1735.5,669.7 1748.6,669.7 1750.0,668.9 1751.5,669.7 1779.8,669.7 1819.8,669.7 1822.1,652.0 1823.9,652.3 1825.6,651.7 1827.4,651.6 1829.1,651.5 1830.5,652.9 1833.3,652.0 1835.0,652.4 1836.6,651.9 1838.2,652.1 1839.9,652.3 1841.5,652.6 1843.1,652.0 1845.1,652.9 1846.8,652.1 1848.5,651.9 1850.2,650.9 1852.3,651.0 1854.4,650.6 1857.2,652.0 1859.1,652.2 1861.0,651.9 1862.9,651.9 1864.8,652.0 1866.4,669.7 1998.9,669.7 2001.1,650.1 2003.0,649.6 2004.9,649.7 2006.8,650.1 2008.4,669.7 2026.4,669.7 2028.4,652.0 2030.1,651.6 2031.8,652.3 2033.5,651.8 2035.2,651.7 2036.9,651.6 2038.7,652.4 2040.4,652.5 2042.1,652.2 2043.8,652.0 2046.6,652.9 2048.7,652.7 2050.8,652.9 2052.8,654.3 2054.6,652.9 2056.4,652.0 2058.2,651.5 2060.1,651.5 2062.0,626.8 2064.8,625.7 2067.0,626.2 2069.1,626.8 2071.2,625.9 2073.3,625.7 2074.7,613.6 2077.5,614.2 2079.1,614.1 2080.7,613.9 2082.3,614.7 2083.9,614.7 2085.5,614.2 2087.1,613.9 2088.7,614.2 2090.1,609.4 2091.5,591.1 2094.3,585.5 2095.7,578.0 2097.8,578.1 2099.9,577.1 2101.7,576.9 2103.4,577.0 2105.2,576.6 2106.9,577.1 2108.3,575.7 2109.8,577.1 2111.6,577.0 2113.4,577.1 2115.2,577.1 2117.0,576.8 2118.8,577.1 2120.6,576.6 2122.4,577.1 2125.2,576.3 2127.3,576.2 2129.4,576.6 2131.4,579.9 2133.0,606.6 2134.9,606.1 2136.8,606.5 2138.7,606.6 2140.1,610.8 2141.5,669.7 2169.5,669.7 2170.9,650.9 2172.9,650.9 2174.3,669.7 2214.4,669.7 2215.8,652.9 2217.2,604.6 2219.6,604.1 2222.0,604.6 2223.1,670.6 2224.2,670.6 2226.2,650.9 2229.0,651.5 2231.8,649.5 2234.6,651.5 2236.3,649.8 2238.0,649.2 2239.8,649.9 2241.7,650.9 2243.8,650.9 2245.9,651.5 2247.5,651.5 2249.2,651.3 2250.9,651.4 2252.6,651.2 2254.3,650.9 2255.7,652.9 2257.1,670.6 2259.1,652.0 2260.9,651.7 2262.7,650.9 2265.5,651.5 2268.3,669.7 2295.8,669.7 2298.1,650.1 2299.7,650.4 2301.4,649.7 2303.1,649.5 2304.8,649.5 2306.9,649.6 2309.0,648.7 2311.1,648.7 2313.2,649.5 2316.0,652.0 2317.9,651.9 2319.8,651.5 2321.6,650.9 2323.6,669.7 2328.1,669.7" fill="none" stroke="#f19d49" stroke-width="2" stroke-linejoin="round"/>
<text x="1296.6" y="711.0" font-size="25.7" fill="#ccccdc" text-anchor="middle" textLength="61.2" lengthAdjust="spacing" stroke="#ccccdc" stroke-width="0.35">10/15</text>
<text x="1399.6" y="711.0" font-size="25.7" fill="#ccccdc" text-anchor="middle" textLength="62.0" lengthAdjust="spacing" stroke="#ccccdc" stroke-width="0.35">10/18</text>
<text x="1502.6" y="711.0" font-size="25.7" fill="#ccccdc" text-anchor="middle" textLength="61.2" lengthAdjust="spacing" stroke="#ccccdc" stroke-width="0.35">10/21</text>
<text x="1605.6" y="711.0" font-size="25.7" fill="#ccccdc" text-anchor="middle" textLength="66.0" lengthAdjust="spacing" stroke="#ccccdc" stroke-width="0.35">10/24</text>
<text x="1709.2" y="711.0" font-size="25.7" fill="#ccccdc" text-anchor="middle" textLength="63.9" lengthAdjust="spacing" stroke="#ccccdc" stroke-width="0.35">10/27</text>
<text x="1812.6" y="711.0" font-size="25.7" fill="#ccccdc" text-anchor="middle" textLength="66.8" lengthAdjust="spacing" stroke="#ccccdc" stroke-width="0.35">10/30</text>
<text x="1915.6" y="711.0" font-size="25.7" fill="#ccccdc" text-anchor="middle" textLength="61.2" lengthAdjust="spacing" stroke="#ccccdc" stroke-width="0.35">11/02</text>
<text x="2020.6" y="711.0" font-size="25.7" fill="#ccccdc" text-anchor="middle" textLength="61.2" lengthAdjust="spacing" stroke="#ccccdc" stroke-width="0.35">11/05</text>
<text x="2123.8" y="711.0" font-size="25.7" fill="#ccccdc" text-anchor="middle" textLength="62.0" lengthAdjust="spacing" stroke="#ccccdc" stroke-width="0.35">11/08</text>
<text x="2226.6" y="711.0" font-size="25.7" fill="#ccccdc" text-anchor="middle" textLength="53.2" lengthAdjust="spacing" stroke="#ccccdc" stroke-width="0.35">11/11</text>
<text x="1283.9" y="680.7" font-size="25.7" fill="#ccccdc" text-anchor="end" textLength="36.8" lengthAdjust="spacing" stroke="#ccccdc" stroke-width="0.35">0 b</text>
<text x="1283.9" y="588.7" font-size="25.7" fill="#ccccdc" text-anchor="end" textLength="53.7" lengthAdjust="spacing" stroke="#ccccdc" stroke-width="0.35">2 Gb</text>
<text x="1283.9" y="496.7" font-size="25.7" fill="#ccccdc" text-anchor="end" textLength="55.0" lengthAdjust="spacing" stroke="#ccccdc" stroke-width="0.35">4 Gb</text>
<text x="1283.9" y="404.7" font-size="25.7" fill="#ccccdc" text-anchor="end" textLength="54.6" lengthAdjust="spacing" stroke="#ccccdc" stroke-width="0.35">6 Gb</text>
<text x="1283.9" y="312.7" font-size="25.7" fill="#ccccdc" text-anchor="end" textLength="54.5" lengthAdjust="spacing" stroke="#ccccdc" stroke-width="0.35">8 Gb</text>
<rect x="1228" y="741" width="28" height="8" rx="4" fill="#6592eb"/><text x="1272.3" y="753.0" font-size="25.7" fill="#ccccdc" textLength="107.0" lengthAdjust="spacing" stroke="#ccccdc" stroke-width="0.35">Requests</text><rect x="1399" y="741" width="28" height="8" rx="4" fill="#f19d49"/><text x="1443.0" y="753.0" font-size="25.7" fill="#ccccdc" textLength="74.3" lengthAdjust="spacing" stroke="#ccccdc" stroke-width="0.35">Usage</text>
</svg>
</div>
<div class="panel" style="left:26px;top:798px;width:2334px;height:744px">
<svg class="ch" viewBox="26 798 2334 744" width="2334" height="744" font-family='"Liberation Sans", sans-serif'>
<path d="M98.5 897V1491M246.5 897V1491M395.5 897V1491M544.5 897V1491M693.5 897V1491M841.5 897V1491M990.5 897V1491M1139.5 897V1491M1287.5 897V1491M1436.5 897V1491M1588.5 897V1491M1737.5 897V1491M1885.5 897V1491M2034.5 897V1491M2183.5 897V1491M92.6 1482.5H2325.3M92.6 1373.5H2325.3M92.6 1265.5H2325.3M92.6 1156.5H2325.3M92.6 1047.5H2325.3M92.6 939.5H2325.3" stroke="rgba(240,250,255,0.09)" stroke-width="1" fill="none"/>
<polygon points="91.5,1482.5 91.5,1460.0 95.0,1460.0 95.0,1134.5 98.0,1134.5 98.0,1156.0 369.9,1156.0 369.9,1460.0 469.2,1460.0 469.2,1156.0 484.8,1156.0 484.8,1460.0 559.0,1460.0 559.0,1156.0 583.7,1156.0 583.7,1460.0 586.7,1460.0 586.7,1156.0 602.8,1156.0 602.8,1460.0 605.8,1460.0 605.8,1156.0 614.9,1156.0 614.9,1134.5 617.9,1134.5 617.9,1156.0 624.0,1156.0 624.0,1134.5 627.0,1134.5 627.0,1091.0 630.5,1091.0 630.5,1113.0 633.5,1113.0 633.5,961.0 636.6,961.0 636.6,1156.0 661.7,1156.0 661.7,1113.0 664.8,1113.0 664.8,1156.0 708.1,1156.0 708.1,1113.0 711.2,1113.0 711.2,1156.0 723.7,1156.0 723.7,1134.5 726.8,1134.5 726.8,1113.0 729.8,1113.0 729.8,1156.0 760.6,1156.0 760.6,1460.0 764.1,1460.0 764.1,1156.0 785.8,1156.0 785.8,1113.0 788.8,1113.0 788.8,1156.0 800.0,1156.0 846.8,1156.0 846.8,1134.5 850.7,1134.5 850.7,1156.0 872.0,1156.0 872.0,1460.0 878.0,1460.0 878.0,1156.0 893.7,1156.0 893.7,1460.0 1029.8,1460.0 1029.8,1156.0 1045.8,1156.0 1045.8,1460.0 1231.9,1460.0 1231.9,1156.0 1327.7,1156.0 1327.7,1460.0 1586.1,1460.0 1619.0,1460.0 1619.0,1156.0 1635.0,1156.0 1635.0,1460.0 1677.9,1460.0 1677.9,1156.0 1752.1,1156.0 1752.1,1134.5 1900.8,1134.5 1900.8,1113.0 1903.8,1113.0 1903.8,1134.5 1922.9,1134.5 1922.9,1460.0 1988.0,1460.0 1988.0,1134.5 1994.0,1134.5 1994.0,1460.0 2083.8,1460.0 2083.8,1134.5 2098.9,1134.5 2098.9,1460.0 2105.0,1460.0 2105.0,1134.5 2174.0,1134.5 2174.0,1460.0 2177.0,1460.0 2177.0,1134.5 2195.2,1134.5 2195.2,1460.0 2259.8,1460.0 2259.8,1134.5 2316.2,1134.5 2316.2,1460.0 2324.9,1460.0 2324.9,1482.5" fill="#76c47b" fill-opacity="0.065"/>
<polyline points="91.5,1460.0 95.0,1460.0 95.0,1134.5 98.0,1134.5 98.0,1156.0 369.9,1156.0 369.9,1460.0 469.2,1460.0 469.2,1156.0 484.8,1156.0 484.8,1460.0 559.0,1460.0 559.0,1156.0 583.7,1156.0 583.7,1460.0 586.7,1460.0 586.7,1156.0 602.8,1156.0 602.8,1460.0 605.8,1460.0 605.8,1156.0 614.9,1156.0 614.9,1134.5 617.9,1134.5 617.9,1156.0 624.0,1156.0 624.0,1134.5 627.0,1134.5 627.0,1091.0 630.5,1091.0 630.5,1113.0 633.5,1113.0 633.5,961.0 636.6,961.0 636.6,1156.0 661.7,1156.0 661.7,1113.0 664.8,1113.0 664.8,1156.0 708.1,1156.0 708.1,1113.0 711.2,1113.0 711.2,1156.0 723.7,1156.0 723.7,1134.5 726.8,1134.5 726.8,1113.0 729.8,1113.0 729.8,1156.0 760.6,1156.0 760.6,1460.0 764.1,1460.0 764.1,1156.0 785.8,1156.0 785.8,1113.0 788.8,1113.0 788.8,1156.0 800.0,1156.0 846.8,1156.0 846.8,1134.5 850.7,1134.5 850.7,1156.0 872.0,1156.0 872.0,1460.0 878.0,1460.0 878.0,1156.0 893.7,1156.0 893.7,1460.0 1029.8,1460.0 1029.8,1156.0 1045.8,1156.0 1045.8,1460.0 1231.9,1460.0 1231.9,1156.0 1327.7,1156.0 1327.7,1460.0 1586.1,1460.0 1619.0,1460.0 1619.0,1156.0 1635.0,1156.0 1635.0,1460.0 1677.9,1460.0 1677.9,1156.0 1752.1,1156.0 1752.1,1134.5 1900.8,1134.5 1900.8,1113.0 1903.8,1113.0 1903.8,1134.5 1922.9,1134.5 1922.9,1460.0 1988.0,1460.0 1988.0,1134.5 1994.0,1134.5 1994.0,1460.0 2083.8,1460.0 2083.8,1134.5 2098.9,1134.5 2098.9,1460.0 2105.0,1460.0 2105.0,1134.5 2174.0,1134.5 2174.0,1460.0 2177.0,1460.0 2177.0,1134.5 2195.2,1134.5 2195.2,1460.0 2259.8,1460.0 2259.8,1134.5 2316.2,1134.5 2316.2,1460.0 2324.9,1460.0" fill="none" stroke="#8ac97a" stroke-width="2" stroke-linejoin="round"/>
<text x="97.2" y="1519.0" font-size="25.7" fill="#ccccdc" text-anchor="middle" textLength="61.2" lengthAdjust="spacing" stroke="#ccccdc" stroke-width="0.35">10/15</text>
<text x="245.5" y="1519.0" font-size="25.7" fill="#ccccdc" text-anchor="middle" textLength="60.4" lengthAdjust="spacing" stroke="#ccccdc" stroke-width="0.35">10/17</text>
<text x="394.7" y="1519.0" font-size="25.7" fill="#ccccdc" text-anchor="middle" textLength="62.1" lengthAdjust="spacing" stroke="#ccccdc" stroke-width="0.35">10/19</text>
<text x="543.9" y="1519.0" font-size="25.7" fill="#ccccdc" text-anchor="middle" textLength="61.2" lengthAdjust="spacing" stroke="#ccccdc" stroke-width="0.35">10/21</text>
<text x="692.6" y="1519.0" font-size="25.7" fill="#ccccdc" text-anchor="middle" textLength="65.8" lengthAdjust="spacing" stroke="#ccccdc" stroke-width="0.35">10/23</text>
<text x="840.8" y="1519.0" font-size="25.7" fill="#ccccdc" text-anchor="middle" textLength="64.8" lengthAdjust="spacing" stroke="#ccccdc" stroke-width="0.35">10/25</text>
<text x="989.6" y="1519.0" font-size="25.7" fill="#ccccdc" text-anchor="middle" textLength="63.9" lengthAdjust="spacing" stroke="#ccccdc" stroke-width="0.35">10/27</text>
<text x="1138.3" y="1519.0" font-size="25.7" fill="#ccccdc" text-anchor="middle" textLength="65.6" lengthAdjust="spacing" stroke="#ccccdc" stroke-width="0.35">10/29</text>
<text x="1286.6" y="1519.0" font-size="25.7" fill="#ccccdc" text-anchor="middle" textLength="62.2" lengthAdjust="spacing" stroke="#ccccdc" stroke-width="0.35">10/31</text>
<text x="1435.3" y="1519.0" font-size="25.7" fill="#ccccdc" text-anchor="middle" textLength="61.2" lengthAdjust="spacing" stroke="#ccccdc" stroke-width="0.35">11/02</text>
<text x="1587.5" y="1519.0" font-size="25.7" fill="#ccccdc" text-anchor="middle" textLength="62.5" lengthAdjust="spacing" stroke="#ccccdc" stroke-width="0.35">11/04</text>
<text x="1736.5" y="1519.0" font-size="25.7" fill="#ccccdc" text-anchor="middle" textLength="62.1" lengthAdjust="spacing" stroke="#ccccdc" stroke-width="0.35">11/06</text>
<text x="1884.4" y="1519.0" font-size="25.7" fill="#ccccdc" text-anchor="middle" textLength="62.0" lengthAdjust="spacing" stroke="#ccccdc" stroke-width="0.35">11/08</text>
<text x="2033.5" y="1519.0" font-size="25.7" fill="#ccccdc" text-anchor="middle" textLength="57.8" lengthAdjust="spacing" stroke="#ccccdc" stroke-width="0.35">11/10</text>
<text x="2182.7" y="1519.0" font-size="25.7" fill="#ccccdc" text-anchor="middle" textLength="56.8" lengthAdjust="spacing" stroke="#ccccdc" stroke-width="0.35">11/12</text>
<text x="81.4" y="1488.7" font-size="25.7" fill="#ccccdc" text-anchor="end" textLength="15.2" lengthAdjust="spacing" stroke="#ccccdc" stroke-width="0.35">0</text>
<text x="81.4" y="1379.7" font-size="25.7" fill="#ccccdc" text-anchor="end" textLength="14.2" lengthAdjust="spacing" stroke="#ccccdc" stroke-width="0.35">5</text>
<text x="81.4" y="1271.7" font-size="25.7" fill="#ccccdc" text-anchor="end" textLength="25.9" lengthAdjust="spacing" stroke="#ccccdc" stroke-width="0.35">10</text>
<text x="81.4" y="1162.7" font-size="25.7" fill="#ccccdc" text-anchor="end" textLength="24.9" lengthAdjust="spacing" stroke="#ccccdc" stroke-width="0.35">15</text>
<text x="81.4" y="1053.7" font-size="25.7" fill="#ccccdc" text-anchor="end" textLength="29.4" lengthAdjust="spacing" stroke="#ccccdc" stroke-width="0.35">20</text>
<text x="81.4" y="945.7" font-size="25.7" fill="#ccccdc" text-anchor="end" textLength="28.4" lengthAdjust="spacing" stroke="#ccccdc" stroke-width="0.35">25</text>

</svg>
</div>
<svg class="top" width="2386" height="1572" viewBox="0 0 2386 1572" font-family='"Liberation Sans", sans-serif'>
<g stroke="#ccccdc" stroke-width="4" stroke-linecap="round"><path d="M32 28H68M32 38H68M32 48H68"/></g>
<text x="105.9" y="48.4" font-size="30.0" fill="#ccccdc" textLength="79.7" lengthAdjust="spacing" stroke="#ccccdc" stroke-width="0.35">Home</text>
<text x="233.0" y="48.4" font-size="30.0" fill="#ccccdc" textLength="162.4" lengthAdjust="spacing" stroke="#ccccdc" stroke-width="0.35">Dashboards</text>
<text x="442.8" y="48.4" font-size="30.0" fill="#ccccdc" textLength="91.7" lengthAdjust="spacing" stroke="#ccccdc" stroke-width="0.35">Okteto</text>
<text x="582.5" y="48.4" font-size="30.0" fill="#8f909c" textLength="159.8" lengthAdjust="spacing" stroke="#8f909c" stroke-width="0.35">Namespace</text>
<g stroke="#7e7f8a" stroke-width="3" fill="none">
<path d="M205.6 34L212.2 40.1L205.6 46.2"/><path d="M415.5 34L422.1 40.1L415.5 46.2"/><path d="M555.6 34L562.2 40.1L555.6 46.2"/>
</g>
<g stroke="#ccccdc" stroke-width="3.1" fill="none">
<circle cx="801" cy="28.9" r="4.45"/><circle cx="782.9" cy="38" r="4.45"/><circle cx="801" cy="47.1" r="4.45"/>
<path d="M787 36L797 31M787 40L797 45"/>
</g>
<path d="M2299 14V62" stroke="#34363c" stroke-width="2"/>
<path d="M2334 44.5L2342.3 36.5L2350.5 44.5" stroke="#8f909c" stroke-width="3.6" fill="none" stroke-linecap="round" stroke-linejoin="round"/>
<text x="44.0" y="150.3" font-size="25.7" fill="#6e9fff" textLength="138.8" lengthAdjust="spacing" stroke="#6e9fff" stroke-width="1.0">Namespace</text>
<text x="226.7" y="151.6" font-size="30.0" fill="#ccccdc" textLength="73.1" lengthAdjust="spacing" stroke="#ccccdc" stroke-width="0.35">david</text>
<path d="M313 139.5L318 144.5L323 139.5" stroke="#ccccdc" stroke-width="2.2" fill="none" stroke-linecap="round" stroke-linejoin="round"/>
<g stroke="#ccccdc" stroke-width="2.4" fill="none"><rect x="2229" y="129.8" width="9.4" height="9.4"/><rect x="2243.6" y="129.8" width="9.4" height="9.4"/><rect x="2229" y="144.4" width="9.4" height="9.4"/><rect x="2243.6" y="144.4" width="9.4" height="9.4"/></g>
<text x="2273.8" y="149.5" font-size="25.7" fill="#ccccdc" textLength="68.2" lengthAdjust="spacing" stroke="#ccccdc" stroke-width="1.0">Home</text>
<text x="44.0" y="233.6" font-size="30.0" fill="#ccccdc" textLength="60.5" lengthAdjust="spacing" stroke="#ccccdc" stroke-width="1.1">CPU</text>
<text x="1219.9" y="233.8" font-size="30.0" fill="#ccccdc" textLength="111.2" lengthAdjust="spacing" stroke="#ccccdc" stroke-width="1.1">Memory</text>
<text x="43.2" y="842.0" font-size="30.0" fill="#ccccdc" textLength="68.8" lengthAdjust="spacing" stroke="#ccccdc" stroke-width="1.1">Pods</text>
</svg>
</body>
</html>
